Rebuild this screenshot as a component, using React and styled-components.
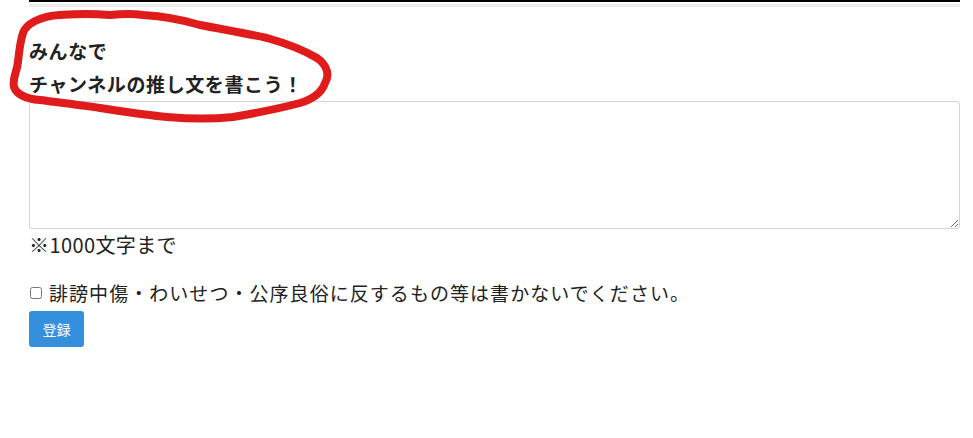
import React from "react";
import styled, { createGlobalStyle } from "styled-components";

const GlobalStyle = createGlobalStyle`
    html, body {
        margin: 0;
        padding: 0;
        background: #fff;
    }
    body {
        font-family: "Noto Sans CJK JP", "Noto Sans", sans-serif;
        color: #212529;
    }
`;

const Page = styled.div`
    position: relative;
    padding: 0 13px 0 29px;
    width: 973px;
    box-sizing: border-box;
`;

const TopRule = styled.div`
    height: 2px;
    background: #000;
    border-bottom: 2px solid #fff;
    box-shadow: 0 3px 0 #ececec;
`;

const Heading = styled.h2`
    margin: 30px 0 1px;
    font-size: 19px;
    font-weight: bold;
    line-height: 33px;
    letter-spacing: 0.6px;
    color: #222;
`;

const TextArea = styled.textarea`
    display: block;
    width: 100%;
    height: 128px;
    box-sizing: border-box;
    border: 1px solid #cfd4d9;
    border-radius: 3px;
    padding: 6px 12px;
    font-family: inherit;
    font-size: 16px;
    resize: vertical;
    outline: none;
`;

const Note = styled.p`
    margin: 0;
    font-size: 20px;
    line-height: 31px;
    letter-spacing: 0.4px;
    color: #222;
`;

const CheckLabel = styled.label`
    display: flex;
    align-items: center;
    margin-top: 18px;
    font-size: 19px;
    line-height: 30px;
    letter-spacing: 1.05px;
    color: #222;
`;

const Check = styled.input`
    width: 12px;
    height: 12px;
    margin: 0 7px 0 1px;
`;

const SubmitButton = styled.button`
    margin-top: 3px;
    width: 55px;
    height: 36px;
    border: none;
    border-radius: 3px;
    background: #3490dc;
    color: #fff;
    font-family: inherit;
    font-size: 14px;
    cursor: pointer;
`;

const Scribble = styled.svg`
    position: absolute;
    left: 0;
    top: 0;
    pointer-events: none;
`;

const loop =
    "M23,33 C26,24 40,16 60,15 C75,14 85,13 110,15 C120,14 130,13 143,15 " +
    "C160,16 180,19 200,25 C220,29 245,33 267,38 C285,43 305,51 317,58 " +
    "C327,65 330,75 325,83 C322,92 313,99 300,103 C285,107 262,112 233,117 " +
    "C215,119 190,119 167,117 C145,115 120,111 100,108 C80,105 55,102 40,100 " +
    "C28,99 17,95 14,87 C12,78 17,72 18,62 C19,52 20,42 23,33 Z";

const App = () => {
    return (
        <>
            <GlobalStyle />
            <Page>
                <TopRule />
                <Heading>
                    みんなで<br />
                    チャンネルの推し文を書こう！
                </Heading>
                <TextArea />
                <Note>※1000文字まで</Note>
                <CheckLabel>
                    <Check type="checkbox" />
                    誹謗中傷・わいせつ・公序良俗に反するもの等は書かないでください。
                </CheckLabel>
                <SubmitButton>登録</SubmitButton>
                <Scribble width="340" height="130" viewBox="0 0 340 130">
                    <path d={loop} fill="none" stroke="#e01b1b" strokeWidth="8" strokeLinejoin="round" />
                </Scribble>
            </Page>
        </>
    );
};

export default App;
